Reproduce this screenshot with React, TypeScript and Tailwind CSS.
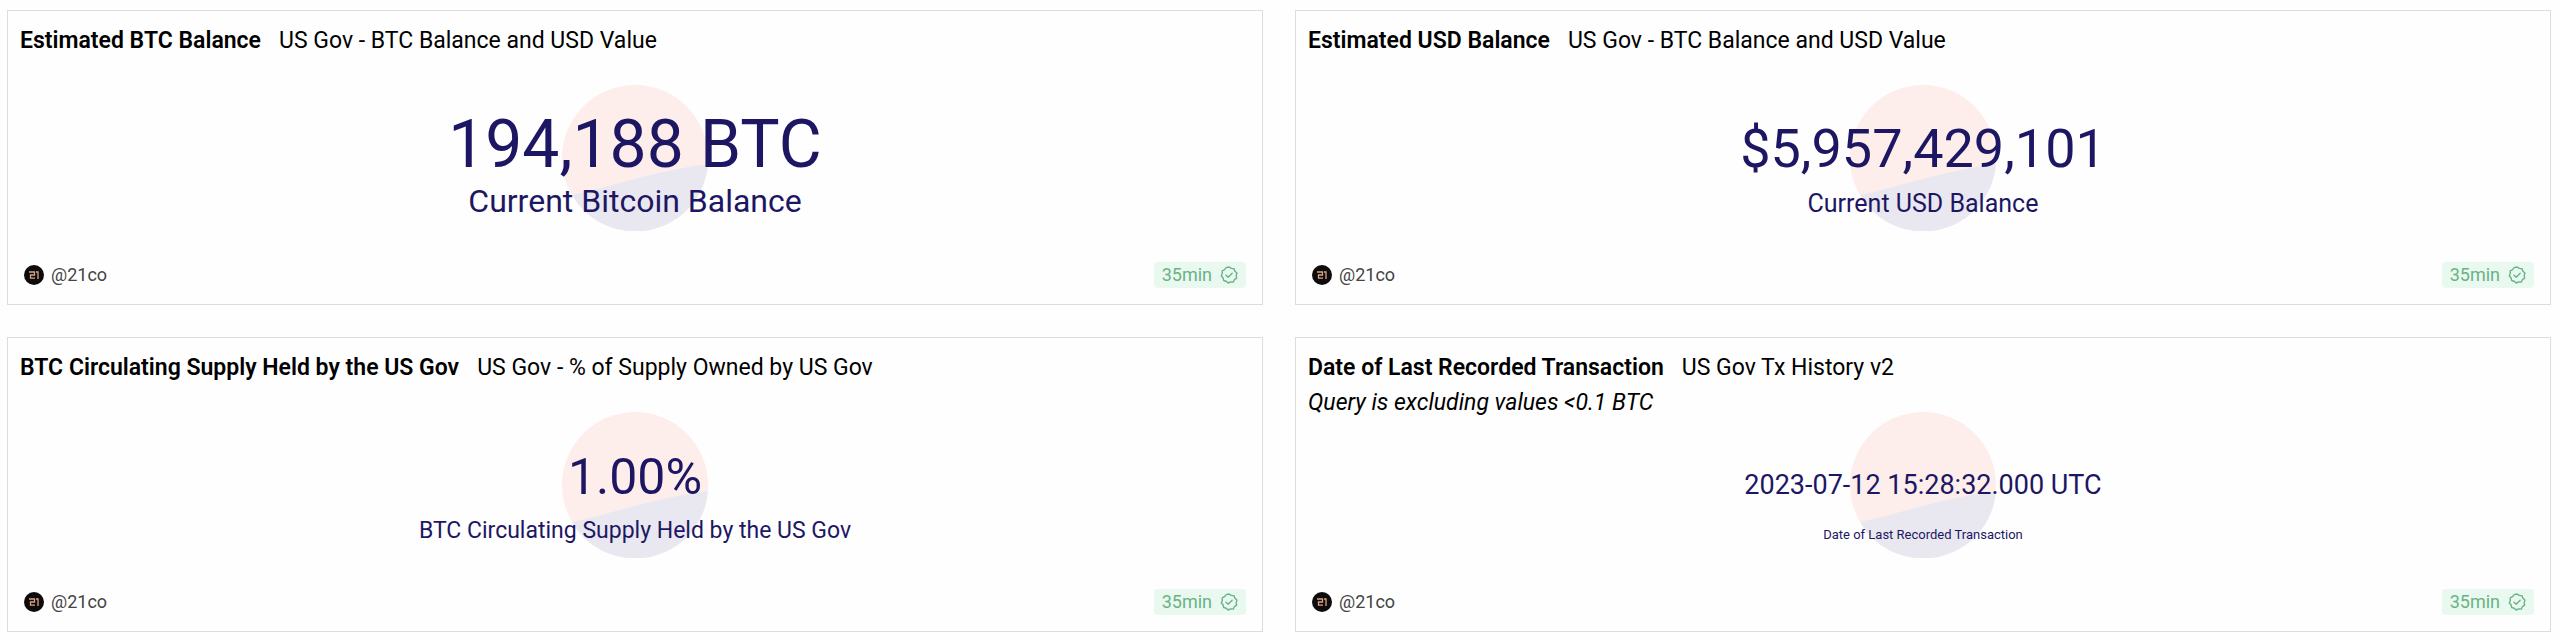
import React from "react";

type Card = {
  title: string;
  subtitle: string;
  note?: string;
  value: string;
  label: string;
  valueClass: string;
  labelClass: string;
};

// line heights keep the baselines level across cards with different text sizes
const cards: Card[] = [
  {
    title: "Estimated BTC Balance",
    subtitle: "US Gov - BTC Balance and USD Value",
    value: "194,188 BTC",
    label: "Current Bitcoin Balance",
    valueClass: "text-[66px] leading-[65px]",
    labelClass: "text-[32px] leading-[42px]",
  },
  {
    title: "Estimated USD Balance",
    subtitle: "US Gov - BTC Balance and USD Value",
    value: "$5,957,429,101",
    label: "Current USD Balance",
    valueClass: "text-[54px] leading-[57px]",
    labelClass: "text-[25px] leading-[37px]",
  },
  {
    title: "BTC Circulating Supply Held by the US Gov",
    subtitle: "US Gov - % of Supply Owned by US Gov",
    value: "1.00%",
    label: "BTC Circulating Supply Held by the US Gov",
    valueClass: "text-[50px] leading-[54px]",
    labelClass: "text-[23px] leading-[36px]",
  },
  {
    title: "Date of Last Recorded Transaction",
    subtitle: "US Gov Tx History v2",
    note: "Query is excluding values <0.1 BTC",
    value: "2023-07-12 15:28:32.000 UTC",
    label: "Date of Last Recorded Transaction",
    valueClass: "text-[27px] leading-[38px]",
    labelClass: "text-[13px] leading-[29px]",
  },
];

const Watermark = () => (
  <svg className="absolute top-1/2 left-1/2 size-[146px] -translate-1/2" viewBox="0 0 146 146">
    <circle cx="73" cy="73" r="73" fill="#fdeeec" />
    <path d="M10 110 C52 101 88 87 146 79 A73 73 0 0 1 10 110Z" fill="#e9e8f0" />
  </svg>
);

const Avatar = () => (
  <svg className="size-5" viewBox="0 0 20 20">
    <circle cx="10" cy="10" r="10" fill="#0d0b0b" />
    <path
      d="M5 7h5.500v3H6.500v3.200h4.500M12 7h2v7"
      fill="none"
      stroke="#d9a583"
      strokeWidth="1.3"
    />
  </svg>
);

const Verified = () => (
  <svg
    className="size-[18px]"
    viewBox="0 0 18 18"
    fill="none"
    stroke="currentColor"
    strokeWidth="1.4"
    strokeLinejoin="round"
    strokeLinecap="round"
  >
    <path d="M9 1 11.300 2.400 14 2.700 14.900 5.200 16.900 7 16.200 9.600 16.600 12.200 14.400 13.700 13.200 16.100 10.500 15.900 8.100 17 6.200 15.200 3.600 14.500 3.200 11.900 1.300 9.900 2.300 7.500 2.200 4.800 4.600 3.700 6.200 1.600Z" />
    <path d="M6 9.200 8.200 11.200 12.200 7.200" />
  </svg>
);

const StatCard = ({ card }: { card: Card }) => (
  <section className="relative flex min-h-[295px] flex-col justify-between border border-[#dfdcdf] bg-[#fefefe]">
    <Watermark />
    <div className="absolute inset-0 flex flex-col items-center justify-end pb-[82px] text-[#1d1763]">
      <div className={card.valueClass}>{card.value}</div>
      <div className="flex h-[45px] items-end">
        <p className={card.labelClass}>{card.label}</p>
      </div>
    </div>

    <header className="relative px-3 pt-3 text-[23px] leading-[35px] text-black">
      <div className="flex flex-wrap gap-x-[18px]">
        <h2 className="font-semibold">{card.title}</h2>
        <a href="#">{card.subtitle}</a>
      </div>
      {card.note && <p className="italic">{card.note}</p>}
    </header>

    <footer className="relative flex items-center justify-between px-4 pb-4 text-lg leading-[26px]">
      <a href="#" className="flex items-center gap-[7px] text-[#444]">
        <Avatar />
        @21co
      </a>
      <button className="flex items-center gap-2 rounded bg-[#eaf9f0] px-2 text-[#69b286]">
        35min
        <Verified />
      </button>
    </footer>
  </section>
);

const App = () => {
  return (
    <main className="grid grid-cols-1 gap-x-8 gap-y-8 bg-[#fefefe] py-[10px] pr-[9px] pl-[7px] font-['Roboto',sans-serif] md:grid-cols-2">
      {cards.map((card) => (
        <StatCard key={card.value} card={card} />
      ))}
    </main>
  );
};

export default App;
